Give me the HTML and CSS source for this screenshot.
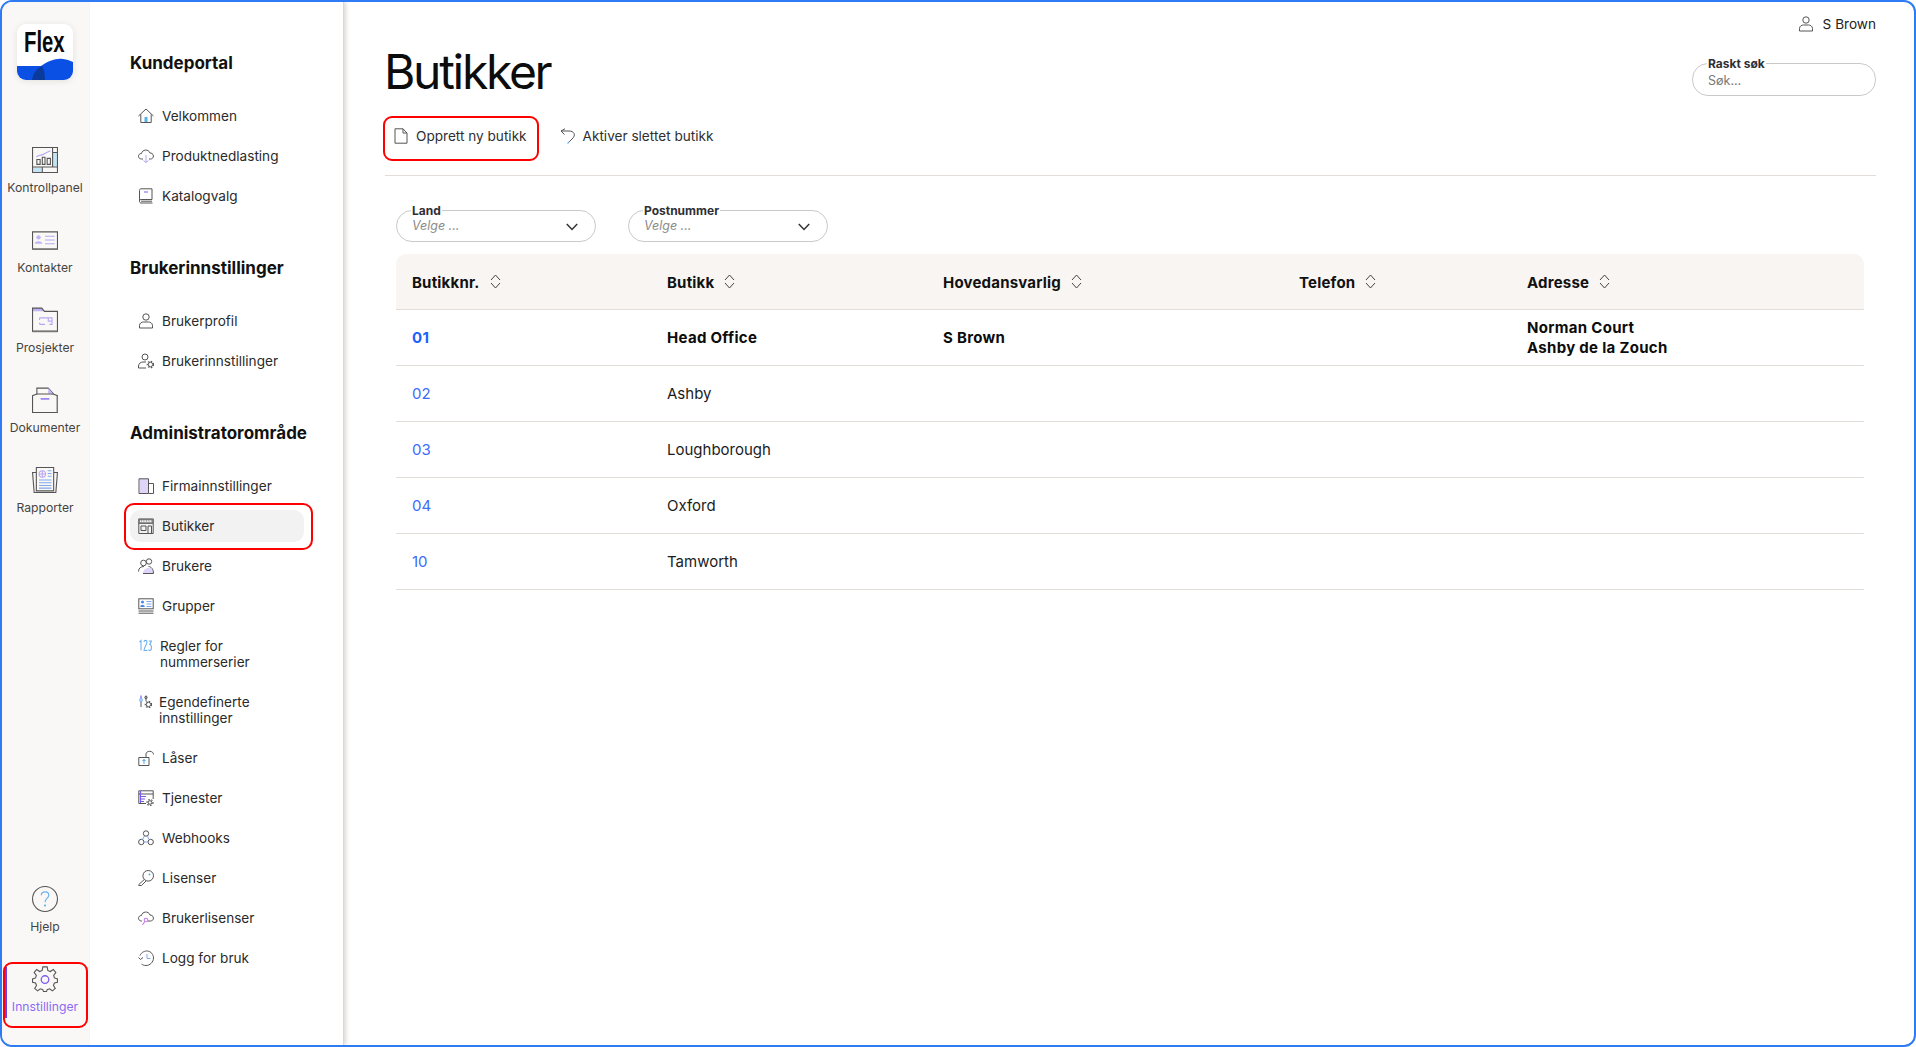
FILE: index.html
```html
<!DOCTYPE html>
<html lang="no">
<head>
<meta charset="utf-8">
<title>Butikker</title>
<link rel="stylesheet" href="styles.css">
</head>
<body>
<div class="frame">
  <nav class="rail">
    <div class="logo">
      <svg class="logo-art" viewBox="0 0 56 56"><path class="logo-blue" d="M0 42H24C31 37 39 34 46 35C50 35.500 54 37 56 38V56H0Z"/><path class="logo-dark" d="M15 56C16 49 20 44 25 42C27 45 28 50 28 56Z"/></svg>
      <span class="logo-text">Flex</span>
    </div>
    <a class="rail-item">
      <svg class="rail-icon" viewBox="0 0 24 24"><rect class="fill-lblue" x="19" y="5" width="4" height="13"/><rect class="fill-lblue" x="1" y="19" width="8" height="4"/><path class="ic" d="M.5.500H23.500V23.500H.5ZM19 .5V18.500M.5 18.500H23.500M9.500 18.500V23.500M19 5H23.500"/><path class="ic-purple" d="M4 9C7 7 9 8 11 6.500S15 4.500 17 3.500"/><path class="ic" d="M4.500 11.500H7.500V16H4.500ZM9.500 9.500H12V16H9.500ZM14 10.500H17V16H14Z"/></svg>
      <span>Kontrollpanel</span>
    </a>
    <a class="rail-item">
      <svg class="rail-icon" viewBox="0 0 24 24"><path class="ic" d="M.5 4.500H23.500V20.500H.5Z"/><path class="ic-thick" d="M.5 20.500H23.500"/><circle class="fill-purple" cx="6" cy="9.500" r="2"/><path class="fill-purple" d="M2.500 15.500C3 12.500 9 12.500 9.500 15.500Z"/><path class="ic-purple" d="M12 8.500H21M12 12H21M12 15.500H21"/></svg>
      <span>Kontakter</span>
    </a>
    <a class="rail-item">
      <svg class="rail-icon" viewBox="0 0 24 24"><path class="fill-purple" d="M.5 1H9L11.500 4H.5Z"/><path class="ic" d="M.5 22.500V1H9L11.500 4H23.500V22.500Z"/><path class="ic-thick" d="M.5 22.500H23.500"/><path class="ic-purple" d="M7 10H18.500V16H16M7 16H12M7 10V12M7 14.500V16M15 10V13H18.500"/></svg>
      <span>Prosjekter</span>
    </a>
    <a class="rail-item">
      <svg class="rail-icon" viewBox="0 0 24 24"><path class="ic" d="M4.500 7V1H15L19.500 6V7"/><path class="fill-purple" d="M15 1L19.500 6H15Z"/><path class="ic" d="M.5 23.500V8L4.500 6.500H19.500L23.500 8V23.500Z"/><path class="ic-thick" d="M23.500 8V23.500"/><path class="ic-violet" d="M8 11H16"/></svg>
      <span>Dokumenter</span>
    </a>
    <a class="rail-item">
      <svg class="rail-icon" viewBox="0 0 24 24"><path class="ic" d="M4 .5H20V22H4ZM4 5H.5L2 23.500H22L23.500 5H20"/><circle class="ic-purple" cx="9.500" cy="6.500" r="3"/><path class="ic-purple" d="M9.500 3.500V9.500M6.500 6.500H12.500"/><path class="ic-blue" d="M14.500 3.500H18M14.500 6H18M14.500 8.500H18M6.500 12H18M6.500 14.500H18M6.500 17H18M6.500 19.500H18"/></svg>
      <span>Rapporter</span>
    </a>
    <div class="rail-bottom">
      <a class="rail-item">
        <svg class="rail-icon" viewBox="0 0 24 24"><circle class="ic" cx="12" cy="12" r="11.500"/><path class="ic-sky" d="M8.500 8.500C9 4.500 15.500 4.500 15.500 8.500C15.500 11.500 12 11.500 12 15"/><circle class="fill-sky" cx="12" cy="18" r="1"/></svg>
        <span>Hjelp</span>
      </a>
      <a class="rail-item rail-active">
        <svg class="rail-icon" viewBox="0 0 24 24"><path class="ic" d="M10 .8H14L14.600 4.100L16.900 5.100L19.700 3.200L22 6.100L20 8.700L20.700 11L23.500 12V15L20.700 15.700L19.800 18L21.500 20.700L18.800 23L16.300 21L14 21.800L13.400 23.600H10.600L10 21.800L7.700 21L5.200 23L2.500 20.700L4.200 18L3.300 15.700L.5 15V12L3.300 11L4 8.700L2 6.100L4.300 3.200L7.100 5.100L9.400 4.100Z"/><circle class="ic-violet" cx="12" cy="12.500" r="3.500"/></svg>
        <span>Innstillinger</span>
      </a>
    </div>
  </nav>

  <aside class="menu">
    <h2 class="menu-title">Kundeportal</h2>
    <ul class="menu-list">
      <li class="menu-item"><svg class="menu-icon" viewBox="0 0 16 16"><rect class="fill-sky" x="6.500" y="9" width="3" height="5.500"/><path class="ic" d="M.5 8L8 1L15.500 8M2.800 6.500V14.500H13.200V6.500"/></svg>Velkommen</li>
      <li class="menu-item"><svg class="menu-icon" viewBox="0 0 16 16"><path class="ic" d="M5 11H3.500C-.5 11-.5 5.500 3.500 5.500C4 1.500 10.500 .5 12 5C16.500 5 16.500 11 12.500 11H11"/><path class="ic-purple" d="M8 7V14.500M5.500 12.500L8 14.500L10.500 12.500"/></svg>Produktnedlasting</li>
      <li class="menu-item"><svg class="menu-icon" viewBox="0 0 16 16"><path class="ic" d="M1.500 13V2.500C1.500 1.500 2 .8 3 .8H14V11.500H3C2 11.500 1.500 12 1.500 13C1.500 14 2 15 3 15H14.500M3 13.200H14"/><path class="ic-violet" d="M6 4H10"/></svg>Katalogvalg</li>
    </ul>

    <h2 class="menu-title">Brukerinnstillinger</h2>
    <ul class="menu-list">
      <li class="menu-item"><svg class="menu-icon" viewBox="0 0 16 16"><circle class="ic" cx="8" cy="4" r="3.200"/><path class="ic" d="M1.500 15V12.500C1.500 10 4 9 5.500 9H10.500C12 9 14.500 10 14.500 12.500V15Z"/></svg>Brukerprofil</li>
      <li class="menu-item"><svg class="menu-icon" viewBox="0 0 16 16"><circle class="ic" cx="7" cy="4" r="3"/><path class="ic" d="M.5 15V13C.5 10.500 3 9 5 9H8M.5 15H8"/><circle class="ic" cx="12.500" cy="11.500" r="2.200"/><circle class="ic-thin" cx="12.500" cy="11.500" r="3.200"/></svg>Brukerinnstillinger</li>
    </ul>

    <h2 class="menu-title">Administratorområde</h2>
    <ul class="menu-list">
      <li class="menu-item"><svg class="menu-icon" viewBox="0 0 16 16"><rect class="fill-lilac" x="2" y="1" width="8" height="14"/><path class="ic" d="M1 15.500V.8H10.500V15.500ZM10.500 5.500H15.500V15.500H10.500"/></svg>Firmainnstillinger</li>
      <li class="menu-item menu-active"><svg class="menu-icon" viewBox="0 0 16 16"><path class="ic" d="M.8 1H15.200V15.500H.8ZM.8 5.500H15.200M3 3H3.800M5.500 3H6.300M8 3H8.800M10.500 3H11.300M13 3H13.800"/><path class="ic-thick" d="M1 1.500H15V5H1Z"/><path class="ic" d="M3 8H8V12.500H3ZM10 15.500V8H13.500V15.500"/></svg>Butikker</li>
      <li class="menu-item"><svg class="menu-icon" viewBox="0 0 16 16"><path class="fill-lilac" d="M5 15.500C5 11.500 8 10 10.500 10C13 10 15.500 12 15.500 15.500Z"/><circle class="ic" cx="5.500" cy="5" r="2.800"/><circle class="ic" cx="11" cy="3.500" r="2.700"/><path class="ic" d="M.5 13.500C.5 10 3 8.500 6 8.500M10.500 8.500C13 8.500 15.500 11 15.500 15.500H5"/></svg>Brukere</li>
      <li class="menu-item"><svg class="menu-icon" viewBox="0 0 16 16"><rect class="ic" x=".8" y=".8" width="14.400" height="10"/><circle class="fill-blue" cx="4.500" cy="4" r="1.500"/><path class="fill-blue" d="M2.200 9C2.500 6 6.500 6 6.800 9Z"/><path class="ic-blue" d="M8.500 3.500H13.500M8.500 6H13.500M8.500 8.500H13.500"/><path class="ic" d="M.5 13H15.500M.5 15.200H15.500"/></svg>Grupper</li>
      <li class="menu-item menu-two menu-num"><svg class="menu-icon menu-icon-sm" viewBox="0 0 13 13"><path class="ic-sky" d="M.5 3L2 1.500V11.500M5 3C5 .8 8 .8 8 3C8 5 5 9 5 11.500H8.500M9.800 2H12.500L10.800 5.500C13 5.500 13 11.500 10.800 11.500C10 11.500 9.800 11 9.500 10.500"/></svg><span>Regler for nummerserier</span></li>
      <li class="menu-item menu-two menu-custom"><svg class="menu-icon menu-icon-sm" viewBox="0 0 13 13"><path class="ic-violet" d="M2 .5V4"/><path class="ic" d="M2 6V12M7 .5V6"/><circle class="ic-sky" cx="2" cy="5" r="1.300"/><circle class="ic" cx="7" cy="2.500" r="1.200"/><circle class="ic" cx="9.500" cy="9.500" r="2.200"/><circle class="ic-thin" cx="9.500" cy="9.500" r="3.200"/></svg><span>Egendefinerte innstillinger</span></li>
      <li class="menu-item"><svg class="menu-icon" viewBox="0 0 16 16"><path class="ic" d="M.8 7.500H11V15.500H.8ZM8 7.500V4C8 .5 15.500 .2 15.500 4.500"/><path class="ic-sky" d="M6 14V10M4.500 11L6 9.500L7.500 11"/></svg>Låser</li>
      <li class="menu-item"><svg class="menu-icon" viewBox="0 0 16 16"><path class="ic" d="M.8 13.500V.8H15.200V9M.8 4H15.200M.8 13.500H8"/><path class="ic-violet" d="M2.500 1V13"/><path class="ic-violet" d="M2.500 6.500H8M2.500 9H7M2.500 11.500H6"/><circle class="ic" cx="12" cy="12.500" r="1.800"/><circle class="ic-thin" cx="12" cy="12.500" r="3"/></svg>Tjenester</li>
      <li class="menu-item"><svg class="menu-icon" viewBox="0 0 16 16"><circle class="ic" cx="8" cy="3.500" r="2.700"/><circle class="ic" cx="3.300" cy="12" r="2.700"/><circle class="ic" cx="12.700" cy="12" r="2.700"/><path class="ic-blue" d="M6.500 6L4.500 9.500M9.500 6L11 9.500M6 12H10"/></svg>Webhooks</li>
      <li class="menu-item"><svg class="menu-icon" viewBox="0 0 16 16"><circle class="ic" cx="10.200" cy="5.800" r="5.300"/><path class="ic" d="M6.300 9.500L.8 14.500V15.500H3.500L8 11"/><circle class="fill-sky" cx="11.500" cy="4.500" r="1"/></svg>Lisenser</li>
      <li class="menu-item"><svg class="menu-icon" viewBox="0 0 16 16"><path class="ic" d="M4 11H3.500C-.5 11-.5 5.500 3.500 5.500C4 1.500 10.500 .5 12 5C16.500 5 16.500 11 12.500 11H10"/><circle class="ic-pink" cx="8" cy="10" r="1.800"/><path class="ic-pink" d="M6.800 11.500L4.500 15"/></svg>Brukerlisenser</li>
      <li class="menu-item"><svg class="menu-icon" viewBox="0 0 16 16"><path class="ic" d="M2 5.500C3.500 2 7 .8 9.500 1C13 1.500 15.500 4.500 15.500 8C15.500 12 12 15.500 8 15.500C6 15.500 4.500 14.800 3.500 14M.5 7.500L2.500 9.500L5 7.500"/><path class="ic-blue" d="M9 4V8.500H12.500"/></svg>Logg for bruk</li>
    </ul>
  </aside>

  <main class="main">
    <div class="userbar">
      <svg class="menu-icon" viewBox="0 0 16 16"><circle class="ic" cx="8" cy="4" r="3.200"/><path class="ic" d="M1.500 15V12.500C1.500 10 4 9 5.500 9H10.500C12 9 14.500 10 14.500 12.500V15Z"/></svg>
      <span>S Brown</span>
    </div>
    <div class="titlebar">
      <h1 class="page-title">Butikker</h1>
      <fieldset class="field field-search">
        <legend>Raskt søk</legend>
        <span class="search-placeholder">Søk...</span>
      </fieldset>
    </div>
    <div class="toolbar">
      <a class="tool tool-marked"><svg class="tool-icon" viewBox="0 0 16 16"><path class="ic" d="M2 .8H10L14 5V15.200H2ZM10 .8V5H14"/></svg>Opprett ny butikk</a>
      <a class="tool"><svg class="tool-icon" viewBox="0 0 16 16"><path class="ic" d="M1 3L5 .8M1 3L4.500 6.500M1 3H9C14 3 16.500 7 12 11L8 15"/><path class="ic-sky" d="M9.500 13.500L7.500 15.500"/></svg>Aktiver slettet butikk</a>
    </div>
    <div class="filters">
      <fieldset class="field field-select">
        <legend>Land</legend>
        <span class="select-placeholder">Velge ...</span>
        <svg class="chevron" viewBox="0 0 12 8"><path d="M.8 1L6 6.500L11.200 1"/></svg>
      </fieldset>
      <fieldset class="field field-select">
        <legend>Postnummer</legend>
        <span class="select-placeholder">Velge ...</span>
        <svg class="chevron" viewBox="0 0 12 8"><path d="M.8 1L6 6.500L11.200 1"/></svg>
      </fieldset>
    </div>
    <table class="stores">
      <colgroup>
        <col class="col-nr"><col class="col-name"><col class="col-owner"><col class="col-phone"><col>
      </colgroup>
      <thead>
        <tr>
          <th>Butikknr.<svg class="sort" viewBox="0 0 11 15"><path d="M1 6L5.500 1L10 6M1 9L5.500 14L10 9"/></svg></th>
          <th>Butikk<svg class="sort" viewBox="0 0 11 15"><path d="M1 6L5.500 1L10 6M1 9L5.500 14L10 9"/></svg></th>
          <th>Hovedansvarlig<svg class="sort" viewBox="0 0 11 15"><path d="M1 6L5.500 1L10 6M1 9L5.500 14L10 9"/></svg></th>
          <th>Telefon<svg class="sort" viewBox="0 0 11 15"><path d="M1 6L5.500 1L10 6M1 9L5.500 14L10 9"/></svg></th>
          <th>Adresse<svg class="sort" viewBox="0 0 11 15"><path d="M1 6L5.500 1L10 6M1 9L5.500 14L10 9"/></svg></th>
        </tr>
      </thead>
      <tbody>
        <tr class="row-main"><td class="nr">01</td><td>Head Office</td><td>S Brown</td><td></td><td>Norman Court<br>Ashby de la Zouch</td></tr>
        <tr><td class="nr">02</td><td>Ashby</td><td></td><td></td><td></td></tr>
        <tr><td class="nr">03</td><td>Loughborough</td><td></td><td></td><td></td></tr>
        <tr><td class="nr">04</td><td>Oxford</td><td></td><td></td><td></td></tr>
        <tr><td class="nr">10</td><td>Tamworth</td><td></td><td></td><td></td></tr>
      </tbody>
    </table>
  </main>
</div>
</body>
</html>
```
FILE: styles.css
```css
*, *::before, *::after { box-sizing: border-box; }
html, body { margin: 0; height: 100%; background: #fff; }
body { font-family: Inter, "Liberation Sans", sans-serif; color: #222; overflow: hidden; }
a { color: inherit; }
ul { list-style: none; margin: 0; padding: 0; }

.frame {
  display: flex;
  width: 1916px;
  height: 1047px;
  border: 2px solid #2f7bf6;
  border-radius: 12px;
  overflow: hidden;
  background: #fff;
}

/* icon primitives */
svg { flex: none; display: block; }
.ic { fill: none; stroke: #555; stroke-width: 1; }
.ic-thick { fill: none; stroke: #777; stroke-width: 1.6; }
.ic-thin { fill: none; stroke: #555; stroke-width: 1.200; stroke-dasharray: 1.500 1.500; }
.ic-purple { fill: none; stroke: #b9a6f2; stroke-width: 1; }
.ic-violet { fill: none; stroke: #7d5cf0; stroke-width: 1.200; }
.ic-blue { fill: none; stroke: #7fa8ea; stroke-width: 1; }
.ic-sky { fill: none; stroke: #6db2f0; stroke-width: 1.100; }
.ic-pink { fill: none; stroke: #c77af0; stroke-width: 1.100; }
.fill-lblue { fill: #c3e4f5; }
.fill-purple { fill: #c4b3f5; }
.fill-lilac { fill: #ded5f8; }
.fill-sky { fill: #55b4ea; }
.fill-blue { fill: #4a86ea; }

/* icon rail */
.rail {
  display: flex;
  flex-direction: column;
  flex: none;
  width: 88px;
  padding: 22px 0 14px;
  background: #faf8f6;
}
.logo {
  position: relative;
  flex: none;
  width: 56px;
  height: 56px;
  margin: 0 0 52px 15px;
  border-radius: 9px;
  background: #fff;
  box-shadow: 0 1px 6px rgba(60, 50, 40, .12);
  overflow: hidden;
}
.logo-art { position: absolute; inset: 0; width: 56px; height: 56px; }
.logo-blue { fill: #0a50e4; }
.logo-dark { fill: #0a3a9c; }
.logo-text {
  position: absolute;
  left: 7px;
  top: 3px;
  font: 700 29px/30px "Liberation Sans", sans-serif;
  color: #0a0a0a;
  transform: scaleX(.7);
  transform-origin: left center;
}
.rail-item {
  position: relative;
  display: flex;
  flex-direction: column;
  align-items: center;
  gap: 6px;
  height: 80px;
  padding: 15px 2px 0 0;
  font-size: 12.200px;
  line-height: 18px;
  color: #444;
  white-space: nowrap;
}
.rail-icon { width: 26px; height: 26px; }
.rail-bottom { margin-top: auto; }
.rail-active { color: #8a6cf5; }
.rail-active::before {
  content: "";
  position: absolute;
  left: 3px;
  top: 16px;
  width: 2px;
  height: 51px;
  background: #6c3ff0;
}
.rail-active::after {
  content: "";
  position: absolute;
  left: 1px;
  right: 2px;
  top: 11px;
  height: 66px;
  border: 2px solid #f00;
  border-radius: 9px;
}

/* section menu */
.menu {
  position: relative;
  z-index: 1;
  flex: none;
  width: 253px;
  padding: 49px 0 0 40px;
  background: #fff;
  box-shadow: 1px 0 0 #dcd7d3, 3px 0 4px rgba(90, 75, 65, .22);
}
.menu-title {
  margin: 0 0 25px;
  font-size: 17px;
  font-weight: 700;
  line-height: 24px;
  color: #111;
}
.menu-list {
  display: flex;
  flex-direction: column;
  gap: 8px;
  margin-bottom: 44px;
}
.menu-item {
  position: relative;
  display: flex;
  align-items: center;
  gap: 8px;
  width: 174px;
  height: 32px;
  padding-left: 8px;
  font-size: 13.600px;
  line-height: 16.500px;
  color: #2a2a2a;
  border-radius: 10px;
  white-space: nowrap;
}
.menu-icon { width: 16px; height: 16px; }
.menu-icon-sm { width: 13px; height: 13px; align-self: flex-start; margin-top: 9px; }
.menu-two { height: 48px; white-space: normal; }
.menu-num { padding-left: 9px; }
.menu-custom { padding-left: 9px; gap: 7px; }
.menu-two span { width: 110px; }
.menu-active { background: #f2f2f2; }
.menu-active::after {
  content: "";
  position: absolute;
  left: -6px;
  right: -9px;
  top: -7px;
  bottom: -8px;
  border: 2px solid #f00;
  border-radius: 10px;
}

/* main column */
.main {
  flex: 1;
  min-width: 0;
  padding: 12px 38px 0 42px;
}
.userbar {
  display: flex;
  justify-content: flex-end;
  align-items: center;
  gap: 9px;
  height: 20px;
  font-size: 13.600px;
  color: #222;
}
.titlebar {
  display: flex;
  justify-content: space-between;
  align-items: flex-start;
  height: 72px;
  margin-top: 10px;
}
.page-title {
  margin: 0 0 0 -1px;
  font-size: 48px;
  font-weight: 400;
  line-height: 56px;
  letter-spacing: -2.300px;
  color: #0c0c0c;
}
.field {
  margin: 0;
  min-width: 0;
  border: 1px solid #c9c9c9;
  border-radius: 16px;
  background: #fff;
}
.field legend {
  padding: 0 1px;
  margin-left: -1px;
  font-size: 12px;
  font-weight: 700;
  line-height: 13px;
  color: #2f2f35;
}
.field-search {
  width: 184px;
  height: 39px;
  margin-top: 13px;
  padding: 0 15px;
}
.search-placeholder { display: block; margin-top: 2px; font-size: 12.500px; line-height: 18px; color: #777; }
.toolbar {
  display: flex;
  gap: 17px;
  height: 60px;
  border-bottom: 1px solid #e2ddd9;
  align-items: flex-start;
}
.tool {
  position: relative;
  display: flex;
  align-items: center;
  gap: 7px;
  height: 40px;
  padding: 0 8px;
  font-size: 13.600px;
  color: #2f2f2f;
  white-space: nowrap;
}
.tool-icon { width: 16px; height: 16px; }
.tool-marked::after {
  content: "";
  position: absolute;
  left: -2px;
  right: -4px;
  top: 0;
  bottom: -5px;
  border: 2px solid #f00;
  border-radius: 9px;
}
.filters {
  display: flex;
  gap: 32px;
  margin: 28px 0 12px 11px;
}
.field-select {
  position: relative;
  width: 200px;
  height: 38px;
  padding: 0 15px;
}
.select-placeholder {
  display: block;
  font-size: 12.500px;
  font-style: italic;
  line-height: 18px;
  color: #8b8b8b;
}
.chevron {
  position: absolute;
  right: 17px;
  top: 6px;
  width: 12px;
  height: 8px;
  fill: none;
  stroke: #333;
  stroke-width: 1.500;
}

/* table */
.stores {
  width: 1468px;
  margin-left: 11px;
  border-collapse: separate;
  border-spacing: 0;
  table-layout: fixed;
  font-size: 15px;
}
.col-nr { width: 255px; }
.col-name { width: 276px; }
.col-owner { width: 356px; }
.col-phone { width: 228px; }
.stores th {
  height: 56px;
  padding: 1px 16px 0;
  text-align: left;
  font-weight: 700;
  letter-spacing: .2px;
  color: #111;
  background: #f8f5f2;
  border-bottom: 1px solid #e3ddd8;
  white-space: nowrap;
}
.stores th > * { display: inline-block; vertical-align: -1px; }
.stores th:first-child { border-top-left-radius: 10px; }
.stores th:last-child { border-top-right-radius: 10px; }
.stores td {
  height: 56px;
  padding: 1px 16px 0;
  border-bottom: 1px solid #e3ddd8;
  line-height: 20px;
  color: #1c1c1c;
}
.stores .nr { color: #3d6bfa; }
.row-main td { font-weight: 700; letter-spacing: .3px; color: #0c0c0c; }
.stores .row-main .nr { color: #1d5ffb; }
.sort {
  width: 11px;
  height: 15px;
  margin-left: 10px;
  fill: none;
  stroke: #444;
  stroke-width: 1;
}
```
